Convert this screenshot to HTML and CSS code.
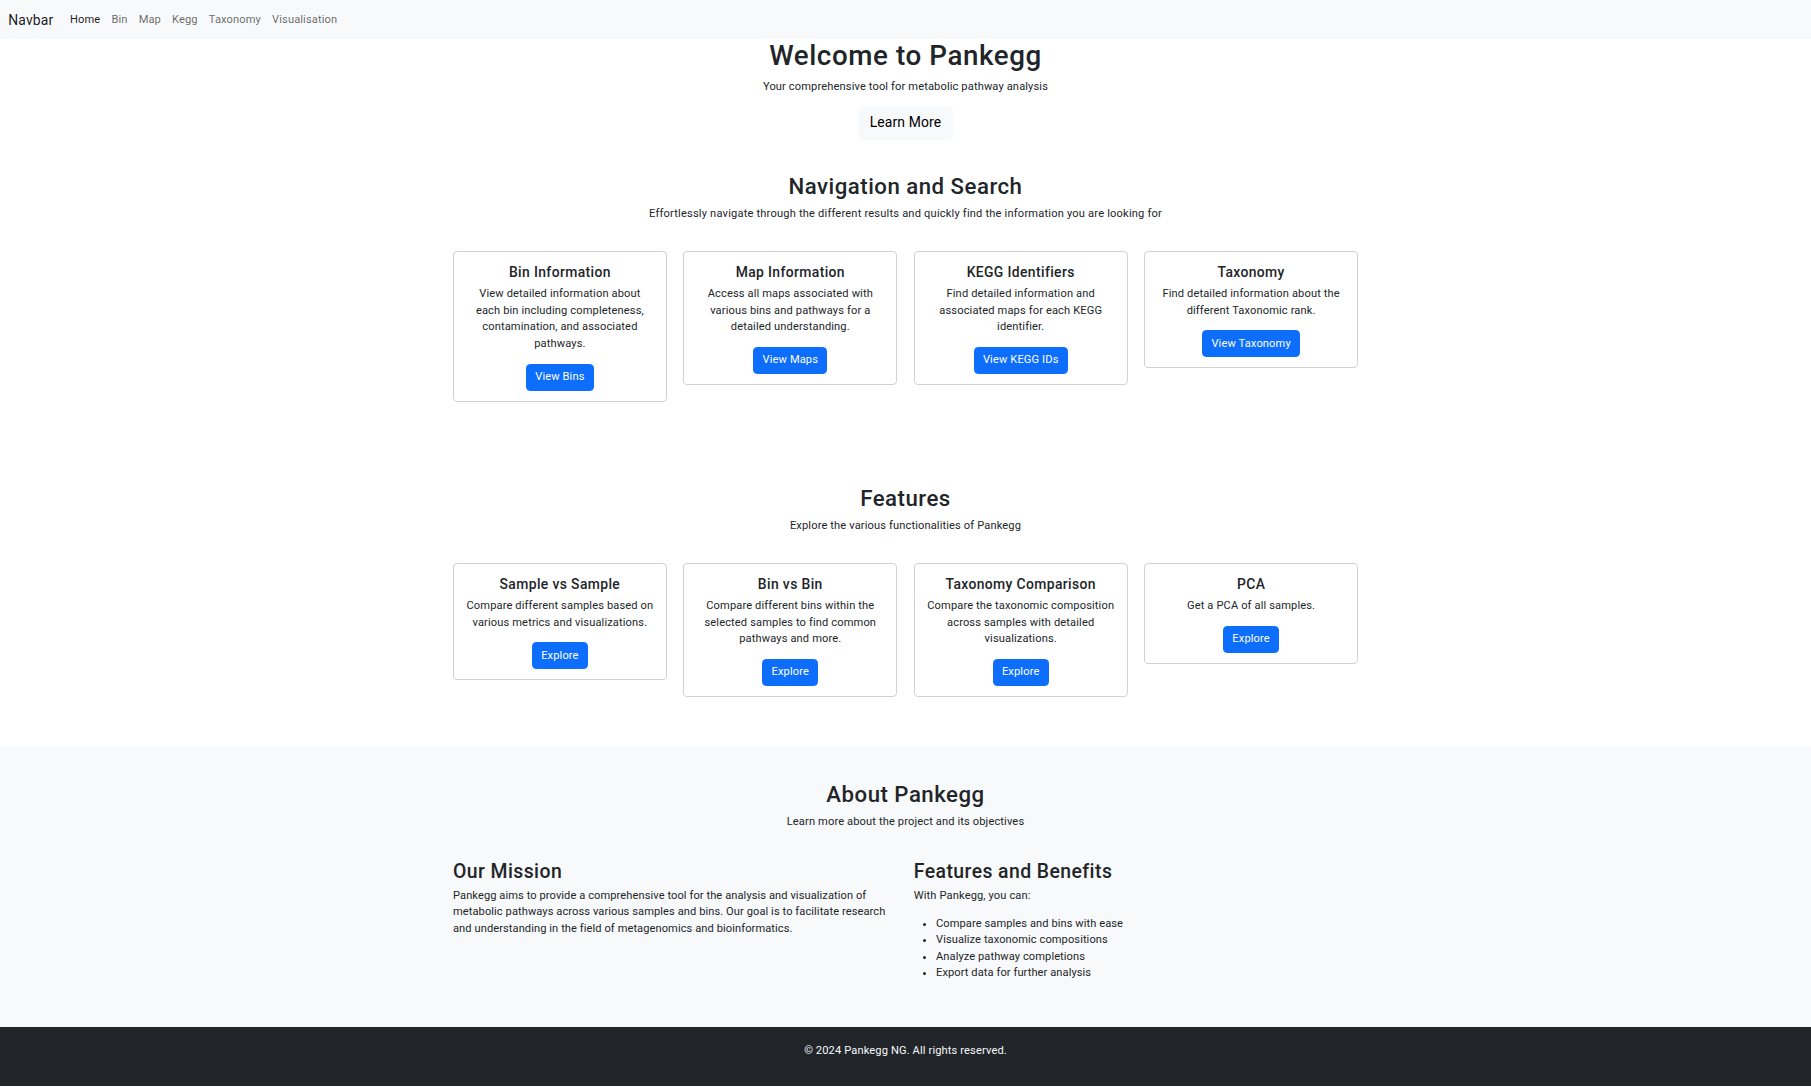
FILE: index.html
```html
<!DOCTYPE html>
<html lang="en">
<head>
<meta charset="utf-8">
<title>Pankegg</title>
<link rel="stylesheet" href="styles.css">
</head>
<body>
<nav class="navbar">
  <a class="brand" href="#">Navbar</a>
  <ul class="nav-list">
    <li><a class="nav-link active" href="#">Home</a></li>
    <li><a class="nav-link" href="#">Bin</a></li>
    <li><a class="nav-link" href="#">Map</a></li>
    <li><a class="nav-link" href="#">Kegg</a></li>
    <li><a class="nav-link" href="#">Taxonomy</a></li>
    <li><a class="nav-link" href="#">Visualisation</a></li>
  </ul>
</nav>

<main>
  <section class="hero">
    <div class="container center">
      <h1 class="hero-title">Welcome to Pankegg</h1>
      <p class="hero-sub">Your comprehensive tool for metabolic pathway analysis</p>
      <a class="btn-light-lg" href="#">Learn More</a>
    </div>
  </section>

  <section class="section section-nav">
    <div class="container center">
      <h2 class="section-title">Navigation and Search</h2>
      <p class="section-sub">Effortlessly navigate through the different results and quickly find the information you are looking for</p>
      <div class="card-grid">
        <div class="card">
          <h5 class="card-title">Bin Information</h5>
          <p class="card-text">View detailed information about<br>each bin including completeness,<br>contamination, and associated<br>pathways.</p>
          <a class="btn-primary" href="#">View Bins</a>
        </div>
        <div class="card">
          <h5 class="card-title">Map Information</h5>
          <p class="card-text">Access all maps associated with<br>various bins and pathways for a<br>detailed understanding.</p>
          <a class="btn-primary" href="#">View Maps</a>
        </div>
        <div class="card">
          <h5 class="card-title">KEGG Identifiers</h5>
          <p class="card-text">Find detailed information and<br>associated maps for each KEGG<br>identifier.</p>
          <a class="btn-primary" href="#">View KEGG IDs</a>
        </div>
        <div class="card">
          <h5 class="card-title">Taxonomy</h5>
          <p class="card-text">Find detailed information about the<br>different Taxonomic rank.</p>
          <a class="btn-primary" href="#">View Taxonomy</a>
        </div>
      </div>
    </div>
  </section>

  <section class="section section-features">
    <div class="container center">
      <h2 class="section-title">Features</h2>
      <p class="section-sub">Explore the various functionalities of Pankegg</p>
      <div class="card-grid">
        <div class="card">
          <h5 class="card-title">Sample vs Sample</h5>
          <p class="card-text">Compare different samples based on<br>various metrics and visualizations.</p>
          <a class="btn-primary" href="#">Explore</a>
        </div>
        <div class="card">
          <h5 class="card-title">Bin vs Bin</h5>
          <p class="card-text">Compare different bins within the<br>selected samples to find common<br>pathways and more.</p>
          <a class="btn-primary" href="#">Explore</a>
        </div>
        <div class="card">
          <h5 class="card-title">Taxonomy Comparison</h5>
          <p class="card-text">Compare the taxonomic composition<br>across samples with detailed<br>visualizations.</p>
          <a class="btn-primary" href="#">Explore</a>
        </div>
        <div class="card">
          <h5 class="card-title">PCA</h5>
          <p class="card-text">Get a PCA of all samples.</p>
          <a class="btn-primary" href="#">Explore</a>
        </div>
      </div>
    </div>
  </section>

  <section class="section section-about">
    <div class="container">
      <h2 class="section-title center">About Pankegg</h2>
      <p class="section-sub center">Learn more about the project and its objectives</p>
      <div class="about-cols">
        <div class="about-col">
          <h3 class="about-title">Our Mission</h3>
          <p class="mission-text">Pankegg aims to provide a comprehensive tool for the analysis and visualization of<br>metabolic pathways across various samples and bins. Our goal is to facilitate research<br>and understanding in the field of metagenomics and bioinformatics.</p>
        </div>
        <div class="about-col">
          <h3 class="about-title">Features and Benefits</h3>
          <p>With Pankegg, you can:</p>
          <ul class="benefits">
            <li>Compare samples and bins with ease</li>
            <li>Visualize taxonomic compositions</li>
            <li>Analyze pathway completions</li>
            <li>Export data for further analysis</li>
          </ul>
        </div>
      </div>
    </div>
  </section>
</main>

<footer class="footer">
  <p class="footer-text">&copy; 2024 Pankegg NG. All rights reserved.</p>
</footer>
</body>
</html>
```

FILE: styles.css
```css
* {
  box-sizing: border-box;
}

html,
body {
  margin: 0;
  padding: 0;
}

body {
  font-family: Roboto, "Liberation Sans", Arial, sans-serif;
  font-size: 11.1px;
  line-height: 16.65px;
  letter-spacing: 0.13px;
  color: #212529;
  background: #ffffff;
}

a {
  text-decoration: none;
}

p {
  margin: 0 0 11.1px;
}

h1,
h2,
h3,
h5 {
  margin: 0;
  font-weight: 500;
  color: #212529;
}

.center {
  text-align: center;
}

.container {
  width: 905px;
  margin: 0 auto;
}

/* Navbar */
.navbar {
  height: 38.9px;
  background: #f8f9fa;
  display: flex;
  align-items: center;
  padding: 1.6px 8.3px 0;
}

.brand {
  font-size: 13.9px;
  line-height: 20.8px;
  letter-spacing: 0.15px;
  color: rgba(0, 0, 0, 0.9);
  margin-right: 11.1px;
}

.nav-list {
  display: flex;
  list-style: none;
  margin: 0;
  padding: 0;
}

.nav-link {
  display: block;
  padding: 0 5.55px;
  color: rgba(0, 0, 0, 0.6);
  line-height: 16.65px;
  letter-spacing: 0.12px;
}

.nav-link.active {
  color: rgba(0, 0, 0, 0.9);
}

/* Hero */
.hero-title {
  font-size: 27.75px;
  line-height: 33.3px;
  letter-spacing: 0.58px;
  margin-bottom: 7px;
}

.hero-sub {
  margin-bottom: 10px;
}

.btn-light-lg {
  display: inline-block;
  background: #f8f9fa;
  border: 1px solid #f8f9fa;
  color: #000000;
  font-size: 13.9px;
  line-height: 20.8px;
  letter-spacing: 0.15px;
  padding: 5.55px 11.1px;
  border-radius: 5.55px;
  vertical-align: top;
}

/* Sections */
.section {
  padding: 33.3px 0;
}

.section-title {
  font-size: 22.2px;
  line-height: 26.64px;
  letter-spacing: 0.5px;
}

.section-sub {
  margin-top: 6.6px;
  margin-bottom: 27.8px;
}

.section-nav .section-sub {
  letter-spacing: 0.19px;
}

.section-about {
  background: #f8f9fa;
}

.section-about .section-title {
  margin-top: 1px;
}

.section-about .section-sub {
  margin-top: 5.6px;
  margin-bottom: 29.5px;
}

/* Cards */
.card-grid {
  display: grid;
  grid-template-columns: repeat(4, 1fr);
  column-gap: 16.65px;
  align-items: start;
}

.card {
  border: 1px solid rgba(0, 0, 0, 0.175);
  border-radius: 4.5px;
  padding: 12.1px 11.1px 10.1px;
  margin-bottom: 16.65px;
  background: #ffffff;
}

.card-title {
  font-size: 13.9px;
  line-height: 16.65px;
  letter-spacing: 0.38px;
  margin-bottom: 5.55px;
}

.card-text {
  margin-bottom: 11.1px;
  white-space: nowrap;
}

.btn-primary {
  display: inline-block;
  background: #0d6efd;
  border: 1px solid #0d6efd;
  color: #ffffff;
  padding: 4.16px 8.33px;
  line-height: 16.65px;
  border-radius: 4.16px;
  vertical-align: top;
}

/* About */
.about-cols {
  display: grid;
  grid-template-columns: 1fr 1fr;
  column-gap: 16.65px;
}

.about-title {
  font-size: 19.4px;
  line-height: 23.3px;
  letter-spacing: 0.43px;
  margin-bottom: 4.7px;
}

.mission-text {
  white-space: nowrap;
  letter-spacing: 0.08px;
}

.benefits {
  margin: 0 0 11.1px;
  padding-left: 22.2px;
  letter-spacing: 0.08px;
}

/* Footer */
.footer {
  background: #212529;
  padding: 16.6px 0 26.4px;
  text-align: center;
}

.footer-text {
  margin: 0;
  color: #f8f9fa;
}
```
